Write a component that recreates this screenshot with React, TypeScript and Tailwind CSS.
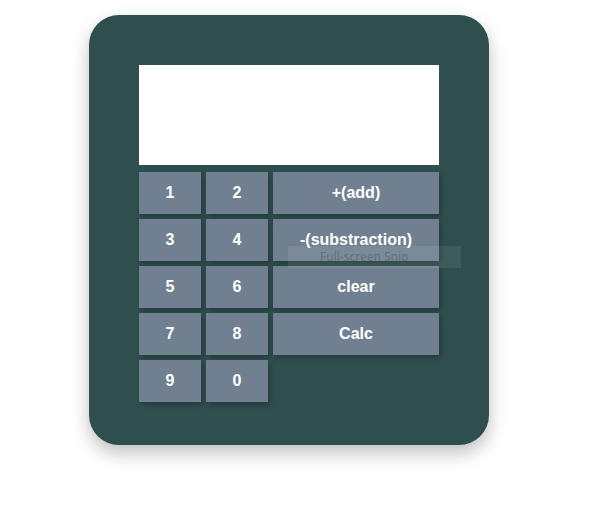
import React from "react";

const Btn = ({ label, wide }: { label: string; wide?: boolean }) => (
  <button
    className={
      (wide ? "w-[166px]" : "w-[62px]") +
      " h-[42px] bg-[#708090] text-white font-bold text-[16px] shadow-[2px_3px_5px_rgba(0,0,0,0.25)] flex items-center justify-center"
    }
  >
    {label}
  </button>
);

export default function App() {
  return (
    <div className="w-[592px] h-[529px] bg-white pt-[15px] pl-[89px] font-['Liberation_Sans',Arial,sans-serif]">
      <div className="relative w-[400px] h-[430px] rounded-[30px] bg-[#2f4f4f] shadow-[0_8px_18px_rgba(0,0,0,0.25)] pt-[50px] pl-[50px]">
        <div className="w-[300px] h-[100px] bg-white" />
        <div className="mt-[7px] flex flex-col gap-[5px]">
          <div className="flex gap-[5px]">
            <Btn label="1" />
            <Btn label="2" />
            <Btn label="+(add)" wide />
          </div>
          <div className="flex gap-[5px]">
            <Btn label="3" />
            <Btn label="4" />
            <Btn label="-(substraction)" wide />
          </div>
          <div className="flex gap-[5px]">
            <Btn label="5" />
            <Btn label="6" />
            <Btn label="clear" wide />
          </div>
          <div className="flex gap-[5px]">
            <Btn label="7" />
            <Btn label="8" />
            <Btn label="Calc" wide />
          </div>
          <div className="flex gap-[5px]">
            <Btn label="9" />
            <Btn label="0" />
          </div>
        </div>
        <div className="absolute left-[199px] top-[231px] w-[173px] h-[22px] bg-[rgba(255,255,255,0.08)] pl-[32px] flex items-center text-[12px] text-[rgba(80,90,100,0.55)] font-['Segoe_UI','Noto_Sans',sans-serif]">
          Full-screen Snip
        </div>
      </div>
    </div>
  );
}
